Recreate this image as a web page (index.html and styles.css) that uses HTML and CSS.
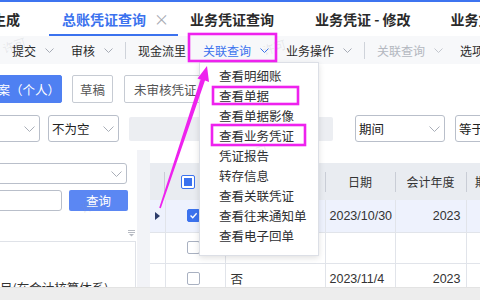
FILE: index.html
```html
<!DOCTYPE html>
<html lang="zh-CN">
<head>
<meta charset="utf-8">
<title>总账凭证查询</title>
<link rel="stylesheet" href="styles.css">
</head>
<body>
<div class="page">
  <div class="topline"></div>
  <nav class="tabs">
    <div class="tab t1">凭证生成</div>
    <div class="tab active">总账凭证查询<span class="close">×</span></div>
    <div class="tab t3">业务凭证查询</div>
    <div class="tab t4">业务凭证 - 修改</div>
    <div class="tab t5">业务凭证查询</div>
  </nav>
  <div class="toolbar">
    <span class="tb">提交<svg class="chev" viewBox="0 0 9 5"><path d="M.5 .5 4.5 4.5 8.5 .5"/></svg></span>
    <span class="tb">审核<svg class="chev" viewBox="0 0 9 5"><path d="M.5 .5 4.5 4.5 8.5 .5"/></svg></span>
    <span class="sep"></span>
    <span class="tb">现金流里</span>
    <span class="tb on">关联查询<svg class="chev" viewBox="0 0 9 5"><path d="M.5 .5 4.5 4.5 8.5 .5"/></svg></span>
    <span class="tb">业务操作<svg class="chev" viewBox="0 0 9 5"><path d="M.5 .5 4.5 4.5 8.5 .5"/></svg></span>
    <span class="sep"></span>
    <span class="tb off">关联查询<svg class="chev" viewBox="0 0 9 5"><path d="M.5 .5 4.5 4.5 8.5 .5"/></svg></span>
    <span class="tb">选项</span>
  </div>
  <section class="filters">
    <div class="frow">
      <button class="btn primary">方案（个人）</button>
      <button class="btn plain draft">草稿</button>
      <button class="btn plain pending">未审核凭证</button>
    </div>
    <div class="frow r2">
      <div class="sel f1"><span></span><svg class="dd" viewBox="0 0 11 6"><path d="M.5 .5 5.5 5.5 10.5 .5"/></svg></div>
      <div class="sel f2"><span>不为空</span><svg class="dd" viewBox="0 0 11 6"><path d="M.5 .5 5.5 5.5 10.5 .5"/></svg></div>
      <div class="gbox"></div>
      <div class="sel f3"><span>期间</span><svg class="dd" viewBox="0 0 11 6"><path d="M.5 .5 5.5 5.5 10.5 .5"/></svg></div>
      <div class="sel f4"><span>等于</span></div>
    </div>
  </section>
  <div class="main">
    <aside class="left">
      <div class="sel l1"><span></span><svg class="dd" viewBox="0 0 11 6"><path d="M.5 .5 5.5 5.5 10.5 .5"/></svg></div>
      <div class="qrow">
        <div class="inp"></div>
        <button class="btn query">查询</button>
      </div>
      <div class="tools"><svg class="filt" viewBox="0 0 7 7"><path d="M0 .5H7M0 2.5H7"/><path class="fill" d="M1 4H6L3.5 6.5Z"/></svg></div>
      <div class="tree"><div class="node">目(在会计核算体系)</div></div>
    </aside>
    <div class="gutter"></div>
    <div class="grid">
      <table>
        <colgroup>
          <col class="c-ind"><col class="c-ck"><col class="c-st"><col class="c-date"><col class="c-year"><col class="c-per">
        </colgroup>
        <thead>
          <tr>
            <th class="first"></th>
            <th class="ck hd"><span class="cb part"><i></i></span></th>
            <th></th>
            <th>日期</th>
            <th>会计年度</th>
            <th class="per">期间</th>
          </tr>
        </thead>
        <tbody>
          <tr class="cur r1">
            <td class="ind"><span class="tri"></span></td>
            <td class="ck"><span class="cb on"><svg viewBox="0 0 13 13"><path d="M3 6.6 5.6 9.2 10.2 3.8"/></svg></span></td>
            <td></td>
            <td class="date">2023/10/30</td>
            <td class="num">2023</td>
            <td></td>
          </tr>
          <tr class="r2">
            <td class="ind"></td>
            <td class="ck"><span class="cb"></span></td>
            <td></td>
            <td></td>
            <td></td>
            <td></td>
          </tr>
          <tr class="r3">
            <td class="ind"></td>
            <td class="ck"><span class="cb"></span></td>
            <td class="txt">否</td>
            <td class="date">2023/11/4</td>
            <td class="num">2023</td>
            <td></td>
          </tr>
        </tbody>
      </table>
    </div>
  </div>
  <div class="statusbar"></div>

  <ul class="menu">
    <li>查看明细账</li>
    <li>查看单据</li>
    <li>查看单据影像</li>
    <li>查看业务凭证</li>
    <li>凭证报告</li>
    <li>转存信息</li>
    <li>查看关联凭证</li>
    <li>查看往来通知单</li>
    <li>查看电子回单</li>
  </ul>

  <span class="wm w1">许可</span>
  <span class="wm w2">许可</span>
  <span class="wm w3">许可</span>
  <span class="wm w4">许可</span>

  <svg class="annot" viewBox="0 0 480 300">
    <rect x="189" y="34" width="87" height="27"/>
    <rect x="213" y="87" width="85" height="17"/>
    <rect x="212" y="125" width="93" height="20"/>
    <polygon class="arrow" points="207,66 209,82 205,80.5 160.8,208.3 159.2,207.7 200.5,79.5 197.5,78.5"/>
  </svg>
</div>
</body>
</html>
```

FILE: styles.css
```css
* { box-sizing: border-box; margin: 0; padding: 0; }
html, body { width: 480px; height: 300px; overflow: hidden; background: #fff; }
body {
  font-family: "Noto Sans CJK SC", "Noto Sans", sans-serif;
  color: #333;
  font-size: 12px;
}
.page { position: relative; width: 480px; height: 300px; overflow: hidden; }

.topline { height: 2px; background: #3d74f0; }

/* tabs */
.tabs {
  height: 34px;
  display: flex;
  align-items: stretch;
  white-space: nowrap;
  background: #fff;
}
.tab {
  flex: none;
  position: relative;
  font-size: 14px;
  font-weight: bold;
  line-height: 34px;
  color: #2a2a2a;
}
.t1 { margin-left: -36px; }
.active { margin-left: 42px; color: #3b72ee; }
.active::after {
  content: "";
  position: absolute;
  left: -13px; right: -9px; bottom: 0;
  height: 2px;
  background: #3b72ee;
}
.close { margin-left: 8px; font-weight: normal; color: #a7abb3; font-size: 15px; }
.t3 { margin-left: 21px; }
.t4 { margin-left: 41px; }
.t5 { margin-left: 40px; }

/* toolbar */
.toolbar {
  height: 28px;
  display: flex;
  align-items: center;
  gap: 17px;
  padding-left: 12px;
  background: #f7f8fa;
  white-space: nowrap;
  font-size: 12px;
  color: #2a2a2a;
}
.tb { display: flex; align-items: center; flex: none; }
.chev { width: 9px; height: 5px; margin-left: 9px; fill: none; stroke: #a6abb5; stroke-width: 1; }
.tb.on { color: #3b72ee; }
.tb.on .chev { stroke: #3b72ee; }
.tb.off { color: #b3b7bf; }
.tb.off .chev { stroke: #c3c7ce; }
.sep { width: 1px; height: 17px; background: #cfd3da; margin: 0 -5px; flex: none; }

/* filters */
.filters { padding-top: 11px; }
.frow { display: flex; align-items: center; height: 28px; white-space: nowrap; }
.frow.r2 { margin-top: 12px; height: 27px; }
.btn {
  font-family: inherit;
  font-size: 12.5px;
  height: 28px;
  border-radius: 2px;
  flex: none;
  text-align: left;
}
.primary {
  margin-left: -28px;
  padding: 0 3px 0 12px;
  width: 90px;
  background: #4f80f2;
  border: 1px solid #4f80f2;
  color: #fff;
}
.plain { background: #fff; border: 1px solid #c6cbd3; color: #555; }
.draft { margin-left: 10px; width: 41px; text-align: center; }
.pending { margin-left: 11px; width: 90px; padding-left: 9px; }

.sel {
  display: flex;
  align-items: center;
  justify-content: space-between;
  height: 27px;
  border: 1px solid #b9bfca;
  border-radius: 3px;
  padding: 0 4px 0 3px;
  background: #fff;
  font-size: 12.5px;
  color: #222;
  flex: none;
}
.dd { width: 11px; height: 6px; fill: none; stroke: #a9aeb8; stroke-width: 1; flex: none; }
.f1 { margin-left: -20px; width: 60px; }
.f2 { margin-left: 8px; width: 71px; }
.gbox { margin-left: 10px; width: 204px; height: 24px; background: #eceef2; border-radius: 2px; flex: none; }
.f3 { margin-left: 22px; width: 90px; }
.f4 { margin-left: 10px; width: 60px; }

/* main */
.main { margin-top: 8px; height: 137px; display: flex; overflow: hidden; }
.left { width: 137px; flex: none; padding-top: 13px; display: flex; flex-direction: column; overflow: hidden; }
.l1 { height: 21px; margin-left: -20px; margin-right: 10px; }
.qrow { display: flex; height: 21px; margin-top: 6px; margin-right: 9px; }
.inp { flex: 1; margin-left: -20px; margin-right: 7px; border: 1px solid #b9bfca; border-radius: 3px; }
.query {
  width: 59px; height: 21px;
  background: #5b87f3; border: none; color: #fff;
  text-align: center; font-size: 12.5px;
}
.tools { height: 30px; display: flex; justify-content: flex-end; align-items: flex-end; padding: 0 2px 4px 0; }
.filt { width: 7px; height: 7px; fill: none; stroke: #b6bac2; stroke-width: 1; }
.filt .fill { fill: #b6bac2; stroke: none; }
.tree {
  flex: 1;
  margin-left: -1px; margin-right: 1px;
  border: 1px solid #dfe2e8;
  border-bottom: none;
  padding-top: 38px;
  overflow: hidden;
}
.node { font-size: 12.5px; line-height: 16px; white-space: nowrap; color: #333; }

.gutter { width: 13px; flex: none; background: #f2f3f7; }
.grid { flex: 1; padding-top: 13px; overflow: hidden; }

table { width: 330px; table-layout: fixed; border-collapse: collapse; }
.c-ind { width: 15px; }
.c-ck { width: 60px; }
.c-st { width: 100px; }
.c-date { width: 70px; }
.c-year { width: 71px; }
.c-per { width: 14px; }

th {
  height: 37px;
  background: #e9ecf1 linear-gradient(#c9cdd6, #c9cdd6) no-repeat left center / 1px 20px;
  font-weight: normal;
  font-size: 12px;
  color: #333;
  text-align: center;
  white-space: nowrap;
  overflow: hidden;
}
th.first { background: #e9ecf1 linear-gradient(#c9cdd6, #c9cdd6) no-repeat right center / 1px 20px; }
th.hd { background-image: none; }
th.per { text-align: left; padding-left: 9px; }
td {
  border-right: 1px solid #e1e4ea;
  border-bottom: 1px solid #e1e4ea;
  font-family: "Liberation Sans", "Noto Sans CJK SC", sans-serif;
  font-size: 12.5px;
  color: #333;
  white-space: nowrap;
  overflow: hidden;
}
tr.r1 td { height: 32px; }
tr.r2 td { height: 31px; }
tr.r3 td { height: 31px; }
tr.cur td { background: #eef2fd; }
td.ind { padding-left: 5px; }
.tri {
  display: block;
  width: 0; height: 0;
  border-left: 5px solid #2b3c6b;
  border-top: 4px solid transparent;
  border-bottom: 4px solid transparent;
}
th.ck { text-align: left; padding-left: 16px; }
td.ck { padding-left: 21px; }
.cb {
  display: block;
  width: 13px; height: 13px;
  border: 1px solid #a9b1c1;
  border-radius: 2px;
  background: #fff;
}
.cb.part { width: 14px; height: 14px; border-color: #3b72ee; padding: 2px; }
.cb.part i { display: block; width: 100%; height: 100%; background: #3b72ee; }
.cb.on { background: #3b72ee; border-color: #3b72ee; }
.cb.on svg { display: block; width: 11px; height: 11px; fill: none; stroke: #fff; stroke-width: 1.6; }
td.txt { padding-left: 5px; font-family: "Noto Sans CJK SC", sans-serif; }
td.date { padding-left: 4px; }
td.num { text-align: right; padding-right: 5px; }

.statusbar { height: 13px; background: #ededed; border-top: 1px solid #e3e3e3; }

/* dropdown menu */
.menu {
  position: absolute;
  left: 199px; top: 62px;
  width: 120px;
  list-style: none;
  padding: 3px 0 9px;
  background: #fff;
  border: 1px solid #dcdfe6;
  box-shadow: 0 2px 6px rgba(0, 0, 0, .12);
  z-index: 3;
}
.menu li { padding-left: 19px; line-height: 20px; font-size: 12.5px; color: #2f3033; white-space: nowrap; }

/* faint watermark */
.wm {
  position: absolute;
  font-size: 12px;
  color: rgba(140, 140, 150, .16);
  transform: rotate(-18deg);
  z-index: 4;
  pointer-events: none;
}
.w1 { left: 2px; top: 36px; }
.w2 { left: 80px; top: 196px; }
.w3 { left: 262px; top: 38px; }
.w4 { left: 244px; top: 143px; }

/* annotation overlay */
.annot { position: absolute; left: 0; top: 0; width: 480px; height: 300px; z-index: 5; pointer-events: none; }
.annot rect { fill: none; stroke: #ee22ee; stroke-width: 2.6; }
.annot .arrow { fill: #ee22ee; }
```
